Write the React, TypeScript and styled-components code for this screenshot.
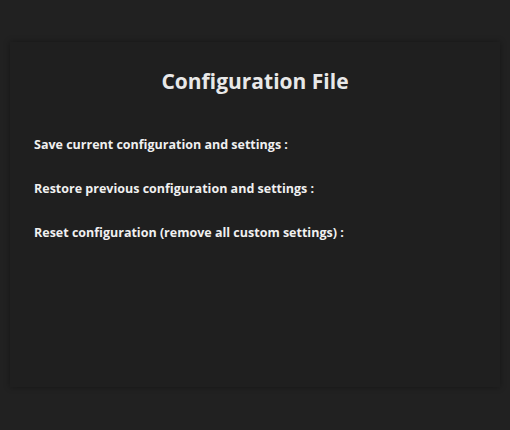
import styled, { createGlobalStyle } from "styled-components";

const Global = createGlobalStyle`
  html, body {
    margin: 0;
    padding: 0;
    background: #212121;
    font-family: "Open Sans", "Liberation Sans", sans-serif;
    color: #eeeeee;
  }
`;

const Page = styled.div`
  padding: 42px 10px 43px;
`;

const Panel = styled.section`
  background: #1f1f1f;
  box-shadow: 0 0 6px rgba(0, 0, 0, 0.35);
  height: 345px;
  box-sizing: border-box;
  padding: 24px 24px;
`;

const Title = styled.h1`
  margin: 0 0 40px;
  text-align: center;
  font-size: 21px;
  font-weight: 700;
  line-height: 30px;
  color: #e8e8e8;
`;

const Rows = styled.div`
  display: flex;
  flex-direction: column;
  gap: 26px;
`;

const Row = styled.div`
  font-size: 12.5px;
  font-weight: 700;
  line-height: 18px;
  color: #f0f0f0;
`;

const items = [
  "Save current configuration and settings :",
  "Restore previous configuration and settings :",
  "Reset configuration (remove all custom settings) :",
];

export default function App() {
  return (
    <>
      <Global />
      <Page>
        <Panel>
          <Title>Configuration File</Title>
          <Rows>
            {items.map((t) => (
              <Row key={t}>{t}</Row>
            ))}
          </Rows>
        </Panel>
      </Page>
    </>
  );
}
